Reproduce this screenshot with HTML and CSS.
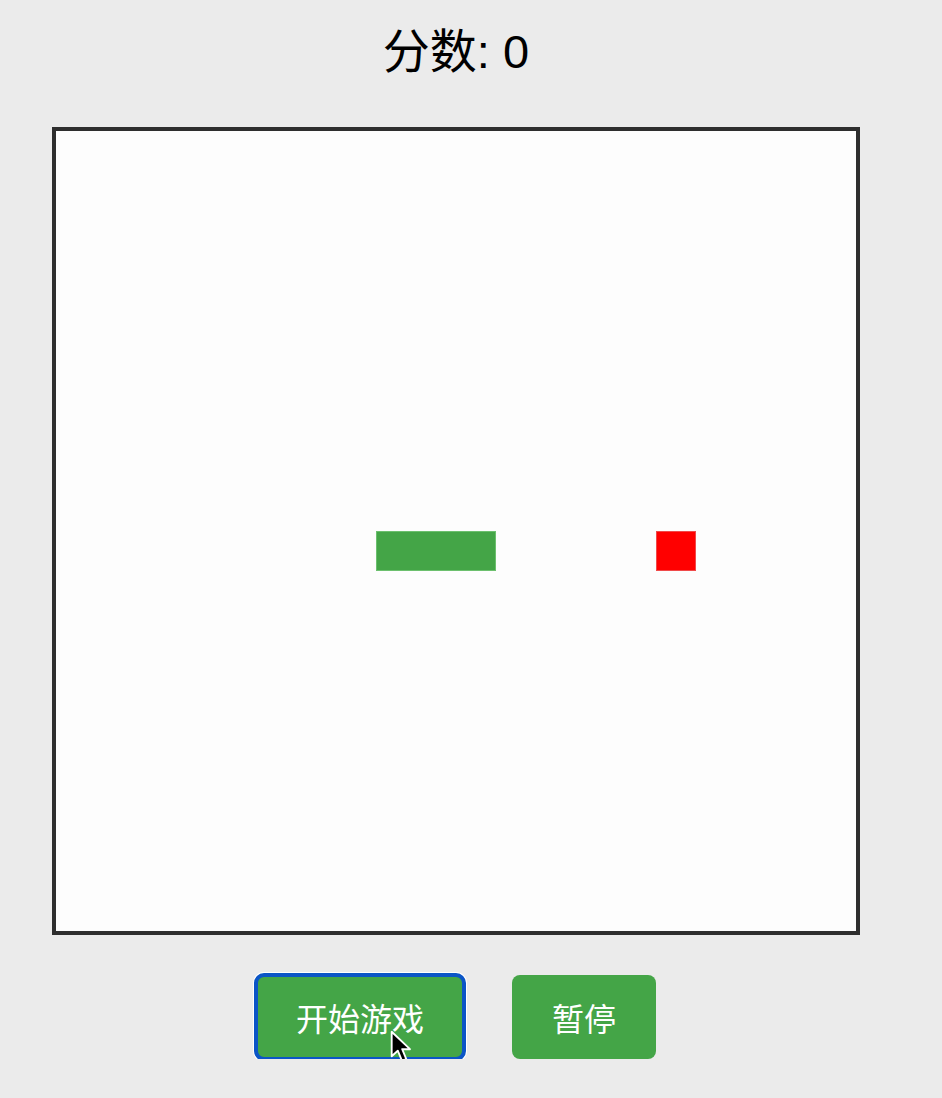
FILE: index.html
```html
<!DOCTYPE html>
<html lang="zh-CN">
<head>
<meta charset="utf-8">
<title>贪吃蛇</title>
<link rel="stylesheet" href="styles.css">
</head>
<body>
<main class="page">
  <h1 class="score">分数: 0</h1>
  <div class="board">
    <div class="snake"></div>
    <div class="food"></div>
  </div>
  <div class="controls">
    <button class="btn btn-focus" type="button">开始游戏</button>
    <button class="btn" type="button">暂停</button>
  </div>
  <svg class="cursor" width="22" height="34" viewBox="0 0 13 20" aria-hidden="true">
    <path d="M1 1 L1 15.5 L4.6 12.2 L7.1 18.2 L9.6 17.1 L7.2 11.3 L11.8 11.3 Z" fill="#000" stroke="#fff" stroke-width="1.1" stroke-linejoin="round"/>
  </svg>
</main>
</body>
</html>
```

FILE: styles.css
```css
html, body {
  margin: 0;
  padding: 0;
  background: #ebebeb;
}

body {
  font-family: "Noto Sans CJK SC", "Noto Sans", "Liberation Sans", sans-serif;
  color: #000;
}

.page {
  position: relative;
  width: 912px;
  display: flex;
  flex-direction: column;
  align-items: center;
}

.score {
  margin: 21px 0 44px;
  font-family: "Liberation Sans", "Noto Sans CJK SC", sans-serif;
  font-size: 47px;
  line-height: 62px;
  font-weight: 400;
}

.board {
  box-sizing: content-box;
  width: 800px;
  height: 800px;
  border: 4px solid #2e2e2e;
  background: #fdfdfd;
  display: grid;
  grid-template-columns: repeat(20, 40px);
  grid-template-rows: repeat(20, 40px);
}

.snake {
  grid-column: 9 / 12;
  grid-row: 11;
  background: #44a547;
  box-shadow: inset 0 0 0 1px #6cc06e;
}

.food {
  grid-column: 16;
  grid-row: 11;
  background: #ff0000;
  box-shadow: inset 0 0 0 1px #f04a4a;
}

.controls {
  display: flex;
  gap: 48px;
  margin-top: 40px;
}

.btn {
  font-family: "Noto Sans CJK SC", "Noto Sans", sans-serif;
  font-size: 32px;
  line-height: 44px;
  padding: 20px 40px;
  border: none;
  border-radius: 8px;
  background: #44a547;
  color: #fff;
  cursor: pointer;
}

.btn-focus {
  outline: 4px solid #0b55c6;
  outline-offset: -2px;
  box-shadow: 0 0 0 3px #ffffff;
}

.cursor {
  position: absolute;
  left: 390px;
  top: 1030px;
}
```
